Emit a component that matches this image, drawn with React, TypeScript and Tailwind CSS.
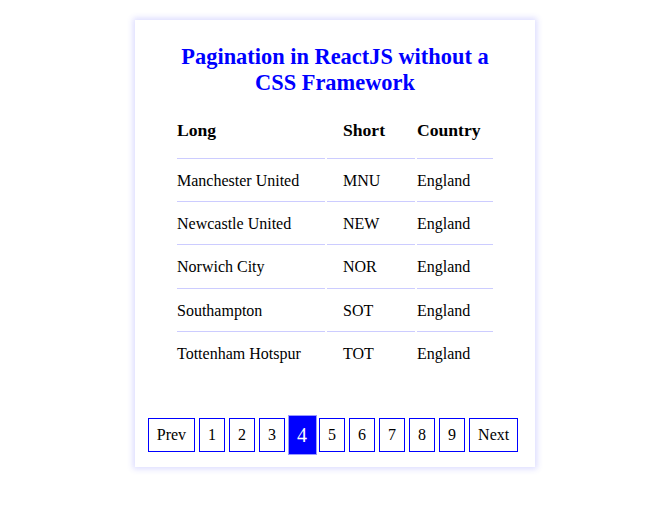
import React from "react";

const rows = [
  ["Manchester United", "MNU", "England"],
  ["Newcastle United", "NEW", "England"],
  ["Norwich City", "NOR", "England"],
  ["Southampton", "SOT", "England"],
  ["Tottenham Hotspur", "TOT", "England"],
];

export default function App() {
  const pages = [1, 2, 3, 4, 5, 6, 7, 8, 9];
  return (
    <div
      className="min-h-[514px] bg-white pt-[20px] pl-[135px]"
      style={{ fontFamily: '"Liberation Serif", "Times New Roman", serif' }}
    >
      <div className="w-[400px] h-[447px] bg-white px-[40px] pt-[24px] shadow-[0_0_6px_2px_rgba(60,60,255,0.18)]">
        <h2 className="text-center text-[22.4px] leading-[26px] font-bold text-[#0000ff]">
          Pagination in ReactJS without a CSS Framework
        </h2>
        <table className="mt-[3px] table-fixed border-separate border-spacing-[2px] w-[320px] text-black">
          <thead>
            <tr>
              <th className="w-[148px] text-left text-[17.6px] leading-[22px] font-bold pt-[18px] pb-[17px] border-b border-[#ccccff]">
                Long
              </th>
              <th className="w-[88px] text-left text-[17.6px] leading-[22px] font-bold pl-[16px] pt-[18px] pb-[17px] border-b border-[#ccccff]">
                Short
              </th>
              <th className="w-[76px] text-left text-[17.6px] leading-[22px] font-bold pt-[18px] pb-[17px] border-b border-[#ccccff]">
                Country
              </th>
            </tr>
          </thead>
          <tbody>
            {rows.map((r, i) => {
              const b = i < rows.length - 1 ? "border-b border-[#ccccff]" : "";
              return (
                <tr key={r[1]}>
                  <td className={`text-[16px] leading-[18.2px] py-[11px] ${b}`}>{r[0]}</td>
                  <td className={`text-[16px] leading-[18.2px] py-[11px] pl-[16px] ${b}`}>{r[1]}</td>
                  <td className={`text-[16px] leading-[18.2px] py-[11px] ${b}`}>{r[2]}</td>
                </tr>
              );
            })}
          </tbody>
        </table>
        <div className="mt-[39px] pr-[4px] flex justify-center items-center gap-[4px]">
          <button className="shrink-0 border border-[#0000ff] bg-white px-[8px] py-[7px] text-[16px] leading-[18px] text-black">
            Prev
          </button>
          {pages.map((p) =>
            p === 4 ? (
              <button
                key={p}
                className="shrink-0 -mx-[1.5px] w-[29px] h-[40px] border border-[#9a9aff] bg-[#0000ff] text-white text-[20px] leading-[24px] text-center"
              >
                {p}
              </button>
            ) : (
              <button
                key={p}
                className="shrink-0 w-[26px] border border-[#0000ff] bg-white py-[7px] text-[16px] leading-[18px] text-black text-center"
              >
                {p}
              </button>
            )
          )}
          <button className="shrink-0 border border-[#0000ff] bg-white px-[8px] py-[7px] text-[16px] leading-[18px] text-black">
            Next
          </button>
        </div>
      </div>
    </div>
  );
}
